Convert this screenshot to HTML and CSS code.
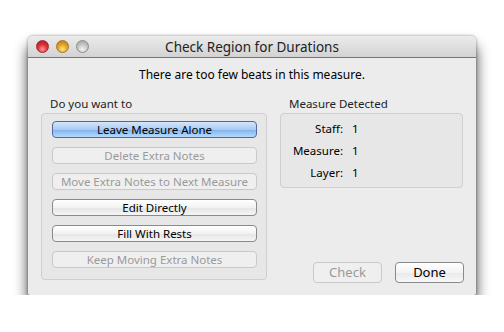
FILE: index.html
```html
<!DOCTYPE html>
<html lang="en">
<head>
  <meta charset="UTF-8">
  <meta name="viewport" content="width=device-width, initial-scale=1.0">
  <link rel="stylesheet" href="styles.css">
  <title>Check Region for Durations</title>
</head>
<body>
  <div class="window">
    <div class="titlebar">
      <div class="lights">
        <span class="light red"></span>
        <span class="light yellow"></span>
        <span class="light gray"></span>
      </div>
      <div class="title">Check Region for Durations</div>
    </div>
    <div class="content">
      <div class="message">There are too few beats in this measure.</div>
      <div class="columns">
        <div class="left">
          <div class="group-label">Do you want to</div>
          <div class="group choices">
            <div class="btn default">Leave Measure Alone</div>
            <div class="btn disabled">Delete Extra Notes</div>
            <div class="btn disabled">Move Extra Notes to Next Measure</div>
            <div class="btn">Edit Directly</div>
            <div class="btn">Fill With Rests</div>
            <div class="btn disabled">Keep Moving Extra Notes</div>
          </div>
        </div>
        <div class="right">
          <div class="group-label">Measure Detected</div>
          <div class="group info">
            <div class="row"><span class="key">Staff:</span><span class="val">1</span></div>
            <div class="row"><span class="key">Measure:</span><span class="val">1</span></div>
            <div class="row"><span class="key">Layer:</span><span class="val">1</span></div>
          </div>
          <div class="actions">
            <div class="push disabled">Check</div>
            <div class="push">Done</div>
          </div>
        </div>
      </div>
    </div>
  </div>
</body>
</html>
```

FILE: styles.css
```css
body {
  margin: 0;
  padding: 36px 0 0 28px;
  background: #fff;
  font-family: "Noto Sans", "DejaVu Sans", sans-serif;
  color: #000;
}

.window {
  width: 448px;
  height: 259px;
  background: #ececec;
  border-radius: 5px 5px 2px 2px;
  box-shadow: 0 10px 14px rgba(0, 0, 0, 0.75), 0 0 3px rgba(0, 0, 0, 0.4);
  overflow: hidden;
}

.titlebar {
  position: relative;
  height: 21px;
  background: linear-gradient(#ebebeb, #d3d3d3);
  border-bottom: 1px solid #777;
  display: flex;
  align-items: center;
  justify-content: center;
}

.lights {
  position: absolute;
  left: 8px;
  top: 4px;
  display: flex;
  gap: 7px;
}

.light {
  width: 13px;
  height: 13px;
  border-radius: 50%;
  box-sizing: border-box;
}

.red {
  background: radial-gradient(circle at 50% 75%, #ff9a9a 0, #e0333a 45%, #a8141b 100%);
  border: 1px solid #9a2a2e;
}

.yellow {
  background: radial-gradient(circle at 50% 75%, #ffe58a 0, #e6a52a 45%, #b47a12 100%);
  border: 1px solid #a07820;
}

.gray {
  background: radial-gradient(circle at 50% 75%, #f4f4f4 0, #c4c4c4 50%, #a0a0a0 100%);
  border: 1px solid #8d8d8d;
}

.title {
  font-size: 13.5px;
  color: #222;
}

.content {
  padding: 0 13px;
}

.message {
  text-align: center;
  font-size: 12px;
  height: 34px;
  line-height: 34px;
}

.columns {
  display: flex;
  gap: 13px;
}

.left {
  width: 226px;
}

.right {
  width: 183px;
}

.group-label {
  font-size: 11.5px;
  padding-left: 9px;
  height: 21px;
  line-height: 23px;
  color: #222;
}

.group {
  border: 1px solid #cfcfcf;
  border-radius: 4px;
  background: #e7e7e7;
  box-sizing: border-box;
}

.choices {
  height: 167px;
  padding: 7px 9px 0 10px;
  display: flex;
  flex-direction: column;
  gap: 9px;
}

.btn {
  height: 17px;
  box-sizing: border-box;
  border: 1px solid #8a8a8a;
  border-radius: 4px;
  background: linear-gradient(#ffffff, #f2f2f2 50%, #e4e4e4 51%, #f6f6f6);
  font-size: 11.5px;
  line-height: 15px;
  text-align: center;
  white-space: nowrap;
}

.btn.default {
  border-color: #5468a0;
  background: linear-gradient(#d4e6fb, #a9cbf3 50%, #80b2ee 51%, #b6dafc);
}

.btn.disabled,
.push.disabled {
  border-color: #c9c9c9;
  background: #efefef;
  color: #9a9a9a;
}

.info {
  height: 75px;
  padding-top: 3px;
}

.row {
  display: flex;
  height: 22px;
  align-items: center;
  font-size: 11.5px;
}

.key {
  width: 62px;
  text-align: right;
}

.val {
  margin-left: 9px;
}

.actions {
  display: flex;
  justify-content: flex-end;
  gap: 13px;
  margin-top: 74px;
  margin-right: -1px;
}

.push {
  width: 69px;
  height: 21px;
  box-sizing: border-box;
  border: 1px solid #8a8a8a;
  border-radius: 4px;
  background: linear-gradient(#ffffff, #f4f4f4 50%, #e8e8e8 51%, #f8f8f8);
  font-size: 13px;
  line-height: 19px;
  text-align: center;
}
```
